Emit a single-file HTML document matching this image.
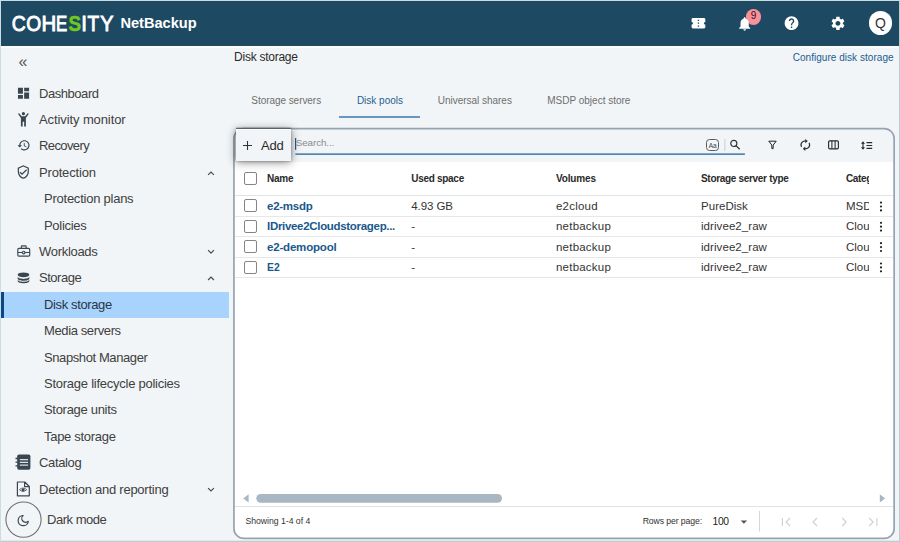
<!DOCTYPE html>
<html lang="en">
<head>
<meta charset="utf-8">
<title>NetBackup - Disk storage</title>
<style>
*{box-sizing:border-box;margin:0;padding:0}
html,body{width:900px;height:542px;overflow:hidden}
body{position:relative;background:#f2f5f7;font-family:"Liberation Sans",sans-serif;color:#3c3c3c}
.abs{position:absolute}
.t{position:absolute;white-space:nowrap;line-height:1}
#frame{position:absolute;left:0;top:0;width:900px;height:542px;border:1px solid #cddcde;border-right-color:#bccdd1;border-bottom-color:#bccdd1;box-shadow:inset 0 -1px 0 0 #e1e9eb;pointer-events:none;z-index:50}
#hdr{position:absolute;left:1px;top:1px;width:898px;height:45px;background:#1d4963}
#logo{position:absolute}
/* nav */
.nav{position:absolute;left:39px;font-size:13px;color:#404040;white-space:nowrap;line-height:16px;letter-spacing:-0.3px}
.nav.sub{left:44px}
#sel{position:absolute;left:1px;top:292px;width:228px;height:26px;background:#a8d3fc}
#sel:before{content:"";position:absolute;left:0;top:0;width:3px;height:26px;background:#07498a}
svg{position:absolute;overflow:visible}
/* card */
#card{position:absolute;left:234px;top:128.500px;width:660px;height:410px;border-radius:10px;background:#fff;overflow:hidden}
#tb{position:absolute;left:0;top:0;width:100%;height:33px;background:#f2f5f7}
.th{position:absolute;top:173px;font-size:11px;font-weight:bold;color:#2e2e2e;white-space:nowrap;line-height:12px;letter-spacing:-0.3px}
.td{position:absolute;font-size:12px;color:#333;white-space:nowrap;line-height:14px;letter-spacing:-0.1px}
.lnk{color:#17568a;font-weight:bold;letter-spacing:-0.35px}
.cb{position:absolute;left:244.200px;width:12.600px;height:12.800px;border:1px solid #858585;border-radius:2px;background:#fff}
.hl{position:absolute;left:235px;width:658px;height:1px;background:#e5e7e9}
.tab{position:absolute;top:95px;font-size:11px;color:#6a6a6a;white-space:nowrap;line-height:12px;letter-spacing:-0.4px}
</style>
</head>
<body>
<div id="hdr">
  <svg id="logo" style="left:-1px;top:-1px" width="220" height="46" viewBox="0 0 220 46" font-family="Liberation Sans, sans-serif">
    <g font-size="21.4" fill="#fff" stroke="#fff" stroke-width="0.9">
      <text x="11.76" y="30.65" textLength="14.03" lengthAdjust="spacingAndGlyphs">C</text>
      <text x="26.24" y="30.65" textLength="14.93" lengthAdjust="spacingAndGlyphs">O</text>
      <text x="41.48" y="30.65" textLength="14.74" lengthAdjust="spacingAndGlyphs">H</text>
      <text x="56.07" y="30.65" textLength="11.20" lengthAdjust="spacingAndGlyphs">E</text>
      <text x="81.37" y="30.65" textLength="5.66" lengthAdjust="spacingAndGlyphs">I</text>
      <text x="87.42" y="30.65" textLength="11.67" lengthAdjust="spacingAndGlyphs">T</text>
      <text x="100.21" y="30.65" textLength="13.27" lengthAdjust="spacingAndGlyphs">Y</text>
    </g>
    <text x="68.61" y="30.849999999999998" font-size="21.4" font-weight="bold" fill="#70c81e" stroke="#70c81e" stroke-width="0.5" textLength="12.58" lengthAdjust="spacingAndGlyphs">S</text>
    <text x="120.4" y="28" font-size="14.5" font-weight="bold" fill="#fff" textLength="76.3" lengthAdjust="spacingAndGlyphs">NetBackup</text>
  </svg>

  <!-- header icons -->
  <div class="abs" style="left:744.8px;top:8.3px;width:15.6px;height:15.6px;border-radius:50%;background:#f8919b"></div>
  <div class="t" id="badge9" style="left:744.8px;top:9px;width:15.6px;text-align:center;font-size:10px;color:#3d0d10;line-height:11px">9</div>
  <div class="abs" style="left:867.8px;top:10.4px;width:23.4px;height:23.4px;border-radius:50%;background:#fff"></div>
  <div class="t" style="left:867.8px;top:14.5px;width:23.4px;text-align:center;font-size:14px;color:#333;line-height:15px">Q</div>
</div>

<div class="abs" style="left:1px;top:46px;width:898px;height:2px;background:#fbfcfc"></div>
<!-- sidebar -->

<!-- header + sidebar icons -->
<svg style="left:0;top:0" width="900" height="542" viewBox="0 0 900 542">
  <g transform="translate(690.200 15.400) scale(0.6875 0.6500)"><path fill="#fff" d="M22 10V6c0-1.11-.9-2-2-2H4c-1.1 0-1.99.89-1.99 2v4c1.1 0 1.99.9 1.99 2s-.89 2-2 2v4c0 1.1.9 2 2 2h16c1.1 0 2-.9 2-2v-4c-1.1 0-2-.9-2-2s.9-2 2-2zm-9 7.500h-2v-2h2v2zm0-4.500h-2v-2h2v2zm0-4.500h-2v-2h2v2z"/></g>
  <g transform="translate(736.400 15.600) scale(0.6875 0.6875)"><path fill="#fff" d="M12 22c1.100 0 2-.9 2-2h-4c0 1.100.89 2 2 2zm6-6v-5c0-3.070-1.640-5.640-4.500-6.320V4c0-.83-.67-1.500-1.500-1.500s-1.500.67-1.500 1.500v.68C7.630 5.360 6 7.920 6 11v5l-2 2v1h16v-1l-2-2z"/></g>
  <g transform="translate(783.300 14.900) scale(0.6875 0.6875)"><path fill="#fff" d="M12 2C6.480 2 2 6.480 2 12s4.480 10 10 10 10-4.480 10-10S17.520 2 12 2zm1 17h-2v-2h2v2zm2.070-7.750l-.9.92C13.450 12.900 13 13.500 13 15h-2v-.5c0-1.100.45-2.100 1.170-2.830l1.240-1.260c.37-.36.59-.86.59-1.410 0-1.100-.9-2-2-2s-2 .9-2 2H8c0-2.210 1.790-4 4-4s4 1.790 4 4c0 .88-.36 1.680-.93 2.250z"/></g>
  <g transform="translate(829.700 15.100) scale(0.6875 0.6875)"><path fill="#fff" d="M19.140 12.940c.04-.3.06-.61.06-.94 0-.32-.02-.64-.07-.94l2.030-1.580c.18-.14.23-.41.12-.61l-1.920-3.320c-.12-.22-.37-.29-.59-.22l-2.390.96c-.5-.38-1.030-.7-1.620-.94l-.36-2.540c-.04-.24-.24-.41-.48-.41h-3.840c-.24 0-.43.17-.47.41l-.36 2.540c-.59.24-1.130.57-1.620.94l-2.390-.96c-.22-.08-.47 0-.59.22L2.740 8.870c-.12.21-.08.47.12.61l2.030 1.580c-.05.3-.09.63-.09.94s.02.640.07.940l-2.030 1.580c-.18.14-.23.41-.12.61l1.920 3.320c.12.22.37.29.59.22l2.390-.96c.5.38 1.030.7 1.620.94l.36 2.540c.05.24.24.41.48.41h3.840c.24 0 .44-.17.47-.41l.36-2.540c.59-.24 1.130-.56 1.620-.94l2.390.96c.22.08.47 0 .59-.22l1.920-3.320c.12-.22.07-.47-.12-.61l-2.010-1.580zM12 15.600c-1.980 0-3.600-1.620-3.600-3.600s1.620-3.600 3.600-3.600 3.600 1.620 3.600 3.600-1.620 3.600-3.600 3.600z"/></g>
  <g transform="translate(16.100 85.800) scale(0.6188 0.6188)"><path fill="#3a4751" d="M3 13h8V3H3v10zm0 8h8v-6H3v6zm10 0h8V11h-8v10zm0-18v6h8V3h-8z"/></g>
  <g transform="translate(17.800 111.800) scale(0.6222 0.6250)"><path fill="#3a4751" d="M9 0.500a2.600 2.600 0 1 1 0 5.200a2.600 2.600 0 1 1 0-5.200zM0.200 3.300l1.900-1.100L6.200 7.200h5.600l4.100-5L17.800 3.300 13 9.800V23.500H10.200V16H7.800v7.500H5V9.800z"/></g>
  <g transform="translate(16.900 138.400) scale(0.5750 0.5750)"><path fill="#3a4751" d="M13 3c-4.970 0-9 4.030-9 9H1l3.890 3.890.07.14L9 12H6c0-3.870 3.130-7 7-7s7 3.130 7 7-3.130 7-7 7c-1.930 0-3.680-.79-4.940-2.060l-1.420 1.420C8.270 19.990 10.510 21 13 21c4.970 0 9-4.030 9-9s-4.030-9-9-9zm-1 5v5l4.280 2.540.72-1.210-3.500-2.080V8H12z"/></g>
  <g transform="translate(15.900 164.600) scale(0.6188 0.6188)"><path fill="#3a4751" d="M12 1L3 5v6c0 5.550 3.840 10.740 9 12 5.160-1.260 9-6.450 9-12V5l-9-4zm7 10c0 4.520-2.980 8.690-7 9.930-4.020-1.240-7-5.410-7-9.930V6.300l7-3.110 7 3.110V11zm-11.590.59L6 13l4 4 8-8-1.410-1.420L10 14.170z"/></g>
  <g transform="translate(207.700 171.400) scale(1.0000 1.0000)"><path d="M0.400 3.500L3.300 0.600L6.200 3.500" fill="none" stroke="#4a4a4a" stroke-width="1.2"/></g>
  <g fill="none" stroke="#3a4751" stroke-width="1.150"><rect x="17.800" y="248.400" width="11.900" height="7.700" rx="1.100"/><path d="M21.300 248.400V246.700Q21.300 245.800 22.200 245.800H25.300Q26.200 245.800 26.200 246.700V248.400M17.800 252.500H22.300M25.100 252.500H29.700"/><circle cx="23.700" cy="252.500" r="1.300"/></g>
  <g transform="translate(207.700 249.800) scale(1.0000 1.0000)"><path d="M0.400 0.400L3.300 3.300L6.200 0.400" fill="none" stroke="#4a4a4a" stroke-width="1.2"/></g>
  <g transform="translate(17.500 272.300) scale(1.0000 1.0000)"><ellipse cx="6" cy="2.500" rx="5.800" ry="2.400" fill="#3a4751"/><path fill="#3a4751" d="M0.200 4.300c0 1.300 2.600 2.300 5.800 2.300s5.800-1 5.800-2.300v1.900c0 1.300-2.600 2.300-5.800 2.300S0.200 7.500 0.200 6.200zM0.200 7.100c0 1.300 2.600 2.300 5.800 2.300s5.800-1 5.800-2.300v1.600c0 1.300-2.600 2.300-5.800 2.300S0.200 10 0.200 8.700z"/></g>
  <g transform="translate(207.700 276.500) scale(1.0000 1.0000)"><path d="M0.400 3.500L3.300 0.600L6.200 3.500" fill="none" stroke="#4a4a4a" stroke-width="1.2"/></g>
  <g transform="translate(0 0)"><rect x="17.200" y="454.500" width="13.200" height="15.200" rx="1.700" fill="#3a4751"/><path d="M15.500 458.500h2.500M15.500 462.200h2.500M15.500 465.900h2.500" stroke="#3a4751" stroke-width="1.300"/><path d="M19.800 459.500h8.300M19.800 462.300h8.300M19.800 465.100h8.300" stroke="#d9dee1" stroke-width="1.250"/></g>
  <g transform="translate(16.800 481.400)"><path d="M0.600 0.600H8L12.500 5.100V14.400H0.600zM7.800 0.800V5.300H12.300" fill="none" stroke="#3a4751" stroke-width="1.200" stroke-linejoin="round"/><path d="M2.700 8.300Q6.300 4.900 9.900 8.300Q6.300 11.700 2.700 8.300z" fill="none" stroke="#3a4751" stroke-width="0.800"/><circle cx="6.300" cy="8.300" r="1.500" fill="#3a4751"/></g>
  <g transform="translate(207.700 487.700) scale(1.0000 1.0000)"><path d="M0.400 0.400L3.300 3.300L6.200 0.400" fill="none" stroke="#4a4a4a" stroke-width="1.2"/></g>
  <g transform="translate(17.600 514.800) scale(1.0000 1.0000)"><path d="M5.500 0.700A5.100 5.100 0 1 0 10.700 6.500A3.700 3.700 0 0 1 5.500 0.700z" fill="none" stroke="#3a4751" stroke-width="1.200" stroke-linejoin="round"/></g>
</svg>
<div class="t" id="coll" style="left:18.5px;top:54px;font-size:16px;color:#555;line-height:16px">«</div>
<div id="sel"></div>
<div class="nav" style="top:86px;letter-spacing:-0.45px">Dashboard</div>
<div class="nav" style="top:112px;letter-spacing:-0.1px">Activity monitor</div>
<div class="nav" style="top:138px;letter-spacing:-0.6px">Recovery</div>
<div class="nav" style="top:165px;letter-spacing:-0.18px">Protection</div>
<div class="nav sub" style="top:191px;letter-spacing:-0.24px">Protection plans</div>
<div class="nav sub" style="top:218px;letter-spacing:-0.3px">Policies</div>
<div class="nav" style="top:244px;letter-spacing:-0.3px">Workloads</div>
<div class="nav" style="top:270px;letter-spacing:-0.47px">Storage</div>
<div class="nav sub" style="top:297px;color:#2a3644;letter-spacing:-0.37px">Disk storage</div>
<div class="nav sub" style="top:323px;letter-spacing:-0.38px">Media servers</div>
<div class="nav sub" style="top:350px;letter-spacing:-0.4px">Snapshot Manager</div>
<div class="nav sub" style="top:376px;letter-spacing:-0.25px">Storage lifecycle policies</div>
<div class="nav sub" style="top:402px;letter-spacing:-0.3px">Storage units</div>
<div class="nav sub" style="top:429px;letter-spacing:-0.3px">Tape storage</div>
<div class="nav" style="top:455px;letter-spacing:-0.35px">Catalog</div>
<div class="nav" style="top:482px;letter-spacing:-0.25px">Detection and reporting</div>
<svg style="left:0;top:480px" width="60" height="62" viewBox="0 480 60 62"><circle cx="23.500" cy="519.600" r="17.600" fill="none" stroke="#707070" stroke-width="1.100"/></svg>
<div class="nav" style="left:47px;top:512px;letter-spacing:-0.48px">Dark mode</div>

<!-- main -->
<div class="abs" style="left:338.8px;top:116px;width:81.6px;height:2px;background:#6797c1"></div>

<div id="card"><div id="tb"></div></div>
<svg style="left:0;top:0" width="900" height="542" viewBox="0 0 900 542"><rect x="233.95" y="128.55" width="660.2" height="409.9" rx="10" ry="10" fill="none" stroke="#96a3b1" stroke-width="1.700"/></svg>
<div class="abs" id="add" style="left:236px;top:129px;width:55px;height:31.800px;background:#f2f5f7;box-shadow:0 1px 9px 0 rgba(0,0,0,.48),0 0 3px 0 rgba(0,0,0,.3)"></div>
<div class="abs" style="left:236px;top:129px;width:55px;height:1px;background:#fcfdfd"></div>
<div class="abs" style="left:706.2px;top:139.2px;width:12.8px;height:12px;border:1px solid #5a5a5a;border-radius:3.500px"></div>
<div class="t" style="left:706.2px;top:142.2px;width:12.8px;text-align:center;font-size:6.500px;color:#3c3c3c;line-height:7px;letter-spacing:-0.200px">Aa</div>

<!-- table lines -->
<div class="hl" style="top:195px;background:#e0e3e5"></div>
<div class="hl" style="top:216px"></div>
<div class="hl" style="top:236px"></div>
<div class="hl" style="top:257px"></div>
<div class="hl" style="top:277px"></div>
<div class="hl" style="top:506px;background:#e0e3e5"></div>
<div class="cb" style="top:172.400px"></div>
<div class="cb" style="top:199.200px"></div>
<div class="cb" style="top:220px"></div>
<div class="cb" style="top:240.300px"></div>
<div class="cb" style="top:261px"></div>

<svg style="left:0;top:0" width="900" height="542" viewBox="0 0 900 542">
  <!-- card outline -->
  <rect x="236" y="127.800" width="55" height="1.100" fill="#56616d"/>
  <!-- add plus -->
  <path d="M247.500 141V150M243 145.500H252" stroke="#333" stroke-width="1.100" fill="none"/>
  <!-- search caret + underline -->
  <rect x="295" y="138" width="1.200" height="11.800" fill="#2f4d7c"/>
  <rect x="295.300" y="153.300" width="449.600" height="1.700" fill="#4f86b3"/>
  <!-- separator -->
  <rect x="724.200" y="139" width="1.300" height="12" fill="#d3d7da"/>
  <!-- magnifier -->
  <g transform="translate(730 139.600)"><circle cx="3.800" cy="3.800" r="3.050" fill="none" stroke="#333" stroke-width="1.150"/><path d="M6 6L9.700 9.700" stroke="#333" stroke-width="1.250"/></g>
  <!-- filter -->
  <g transform="translate(768.200 140.600)"><path d="M0.600 0.600H8L4.950 4.500V8H3.650V4.500z" fill="none" stroke="#222" stroke-width="1" stroke-linejoin="round"/></g>
  <!-- refresh -->
  <g transform="translate(797.950 138.350) scale(0.6125 0.5458)"><path fill="#2a2a2a" d="M12 6v3l4-4-4-4v3c-4.420 0-8 3.580-8 8 0 1.570.46 3.030 1.240 4.260L6.700 14.800c-.45-.83-.7-1.790-.7-2.800 0-3.310 2.690-6 6-6zm6.760 1.740L17.300 9.200c.44.840.7 1.790.7 2.800 0 3.310-2.690 6-6 6v-3l-4 4 4 4v-3c4.420 0 8-3.580 8-8 0-1.570-.46-3.030-1.240-4.260z"/></g>
  <!-- columns -->
  <g transform="translate(828 140.200)"><rect x="0.600" y="0.600" width="9.800" height="8" rx="1.300" fill="none" stroke="#2a2a2a" stroke-width="1.150"/><path d="M3.900 0.600V8.600M7.100 0.600V8.600" stroke="#2a2a2a" stroke-width="1.050"/></g>
  <!-- row height -->
  <g transform="translate(861 141.200)"><path d="M2 1.200V7.400" stroke="#2a2a2a" stroke-width="1.100"/><path d="M0 2.600L2 0L4 2.600zM0 6L2 8.600L4 6z" fill="#2a2a2a"/><path d="M5.500 1.400H11.200M5.500 4.300H11.200M5.500 7.200H11.200" stroke="#2a2a2a" stroke-width="1.100"/></g>
  <!-- kebabs -->
  <g fill="#222" transform="translate(881 201.300)"><circle cx="0" cy="1.300" r="1.100"/><circle cx="0" cy="5.200" r="1.100"/><circle cx="0" cy="9.100" r="1.100"/><circle cx="0" cy="21.500" r="1.100"/><circle cx="0" cy="25.400" r="1.100"/><circle cx="0" cy="29.300" r="1.100"/><circle cx="0" cy="41.900" r="1.100"/><circle cx="0" cy="45.800" r="1.100"/><circle cx="0" cy="49.700" r="1.100"/><circle cx="0" cy="62.200" r="1.100"/><circle cx="0" cy="66.100" r="1.100"/><circle cx="0" cy="70" r="1.100"/></g>
  <!-- scrollbar -->
  <g transform="translate(243 494)"><rect x="13.300" y="0" width="245.700" height="8.700" rx="4.350" fill="#a9b7c3"/><path d="M0.200 4.400L5.600 0.200V8.600z" fill="#a9b7c3"/><path d="M642.200 4.400L636.800 0.200V8.600z" fill="#a9b7c3"/></g>
  <!-- footer -->
  <path d="M740.700 520.600H747.100L743.900 523.800z" fill="#555"/>
  <rect x="759" y="511" width="1" height="20.500" fill="#d6d6d6"/>
  <g transform="translate(781 517)" fill="none" stroke="#cfcfcf" stroke-width="1.100"><path d="M1.400 1V9M9.100 1L5.100 5L9.100 9"/><path d="M36 1L32 5L36 9"/><path d="M61.200 1L65.200 5L61.200 9"/><path d="M88.200 1L92.200 5L88.200 9M95.900 1V9"/></g>
</svg>

<div class="t" id="title" style="left:234.1px;top:48.74px;font-size:12px;line-height:16px;color:#2b2b2b;font-weight:normal;letter-spacing:-0.259px;">Disk storage</div>
<div class="t" id="cfg" style="left:792.7px;top:50.83px;font-size:10px;line-height:13px;color:#1c5c90;font-weight:normal;letter-spacing:0.038px;">Configure disk storage</div>
<div class="t" id="tab1" style="left:251.3px;top:94.23px;font-size:10px;line-height:13px;color:#6e6e6e;font-weight:normal;letter-spacing:-0.053px;">Storage servers</div>
<div class="t" id="tab2" style="left:356.9px;top:94.23px;font-size:10px;line-height:13px;color:#1f5f92;font-weight:normal;letter-spacing:-0.004px;">Disk pools</div>
<div class="t" id="tab3" style="left:437.8px;top:94.23px;font-size:10px;line-height:13px;color:#6e6e6e;font-weight:normal;letter-spacing:-0.024px;">Universal shares</div>
<div class="t" id="tab4" style="left:547.3px;top:94.23px;font-size:10px;line-height:13px;color:#6e6e6e;font-weight:normal;letter-spacing:-0.005px;">MSDP object store</div>
<div class="t" id="addt" style="left:261px;top:137.00px;font-size:13px;line-height:17px;color:#2b2b2b;font-weight:normal;letter-spacing:-0.214px;">Add</div>
<div class="t" id="srch" style="left:295.8px;top:136.47px;font-size:9.9px;line-height:13px;color:#8a8a8a;font-weight:normal;letter-spacing:-0.126px;">Search...</div>
<div class="t" id="h1" style="left:266.9px;top:171.84px;font-size:10px;line-height:13px;color:#2a2a2a;font-weight:bold;letter-spacing:-0.213px;">Name</div>
<div class="t" id="h2" style="left:411.3px;top:171.84px;font-size:10px;line-height:13px;color:#2a2a2a;font-weight:bold;letter-spacing:-0.299px;">Used space</div>
<div class="t" id="h3" style="left:556px;top:171.84px;font-size:10px;line-height:13px;color:#2a2a2a;font-weight:bold;letter-spacing:-0.148px;">Volumes</div>
<div class="t" id="h4" style="left:701px;top:171.84px;font-size:10px;line-height:13px;color:#2a2a2a;font-weight:bold;letter-spacing:-0.310px;">Storage server type</div>
<div class="t" id="h5" style="left:845.9px;top:171.84px;font-size:10px;line-height:13px;color:#2a2a2a;font-weight:bold;letter-spacing:-0.310px;width:23.3px;overflow:hidden;">Category</div>
<div class="t" id="r1a" style="left:267px;top:198.92px;font-size:11.5px;line-height:15px;color:#1a588c;font-weight:bold;letter-spacing:-0.257px;">e2-msdp</div>
<div class="t" id="r1b" style="left:411.3px;top:198.92px;font-size:11.5px;line-height:15px;color:#333;font-weight:normal;letter-spacing:-0.086px;">4.93 GB</div>
<div class="t" id="r1c" style="left:556px;top:198.92px;font-size:11.5px;line-height:15px;color:#333;font-weight:normal;letter-spacing:0.215px;">e2cloud</div>
<div class="t" id="r1d" style="left:701px;top:198.92px;font-size:11.5px;line-height:15px;color:#333;font-weight:normal;letter-spacing:0.030px;">PureDisk</div>
<div class="t" id="r1e" style="left:845.9px;top:198.92px;font-size:11.5px;line-height:15px;color:#333;font-weight:normal;letter-spacing:0.000px;width:23.3px;overflow:hidden;">MSDP</div>
<div class="t" id="r2a" style="left:267px;top:218.72px;font-size:11.5px;line-height:15px;color:#1a588c;font-weight:bold;letter-spacing:-0.312px;">IDrivee2Cloudstoragep...</div>
<div class="t" id="r2b" style="left:411.3px;top:218.72px;font-size:11.5px;line-height:15px;color:#333;font-weight:normal;letter-spacing:0.000px;">-</div>
<div class="t" id="r2c" style="left:556px;top:218.72px;font-size:11.5px;line-height:15px;color:#333;font-weight:normal;letter-spacing:0.214px;">netbackup</div>
<div class="t" id="r2d" style="left:701px;top:218.72px;font-size:11.5px;line-height:15px;color:#333;font-weight:normal;letter-spacing:0.066px;">idrivee2_raw</div>
<div class="t" id="r2e" style="left:845.9px;top:218.72px;font-size:11.5px;line-height:15px;color:#333;font-weight:normal;letter-spacing:0.000px;width:23.3px;overflow:hidden;">Cloud</div>
<div class="t" id="r3a" style="left:267px;top:239.92px;font-size:11.5px;line-height:15px;color:#1a588c;font-weight:bold;letter-spacing:-0.188px;">e2-demopool</div>
<div class="t" id="r3b" style="left:411.3px;top:239.92px;font-size:11.5px;line-height:15px;color:#333;font-weight:normal;letter-spacing:0.000px;">-</div>
<div class="t" id="r3c" style="left:556px;top:239.92px;font-size:11.5px;line-height:15px;color:#333;font-weight:normal;letter-spacing:0.214px;">netbackup</div>
<div class="t" id="r3d" style="left:701px;top:239.92px;font-size:11.5px;line-height:15px;color:#333;font-weight:normal;letter-spacing:0.066px;">idrivee2_raw</div>
<div class="t" id="r3e" style="left:845.9px;top:239.92px;font-size:11.5px;line-height:15px;color:#333;font-weight:normal;letter-spacing:0.000px;width:23.3px;overflow:hidden;">Cloud</div>
<div class="t" id="r4a" style="left:267px;top:259.72px;font-size:11.5px;line-height:15px;color:#1a588c;font-weight:bold;letter-spacing:0.000px;transform:scaleX(.9);transform-origin:0 0;">E2</div>
<div class="t" id="r4b" style="left:411.3px;top:259.72px;font-size:11.5px;line-height:15px;color:#333;font-weight:normal;letter-spacing:0.000px;">-</div>
<div class="t" id="r4c" style="left:556px;top:259.72px;font-size:11.5px;line-height:15px;color:#333;font-weight:normal;letter-spacing:0.214px;">netbackup</div>
<div class="t" id="r4d" style="left:701px;top:259.72px;font-size:11.5px;line-height:15px;color:#333;font-weight:normal;letter-spacing:0.066px;">idrivee2_raw</div>
<div class="t" id="r4e" style="left:845.9px;top:259.72px;font-size:11.5px;line-height:15px;color:#333;font-weight:normal;letter-spacing:0.000px;width:23.3px;overflow:hidden;">Cloud</div>
<div class="t" id="showing" style="left:245.5px;top:515.79px;font-size:8.7px;line-height:11px;color:#333;font-weight:normal;letter-spacing:-0.031px;">Showing 1-4 of 4</div>
<div class="t" id="rpp" style="left:642.7px;top:516.09px;font-size:8.7px;line-height:11px;color:#333;font-weight:normal;letter-spacing:-0.111px;">Rows per page:</div>
<div class="t" id="n100" style="left:712.6px;top:514.83px;font-size:10.3px;line-height:13px;color:#222;font-weight:normal;letter-spacing:-0.396px;">100</div>

<!-- /main -->

<div id="frame"></div>
</body>
</html>
